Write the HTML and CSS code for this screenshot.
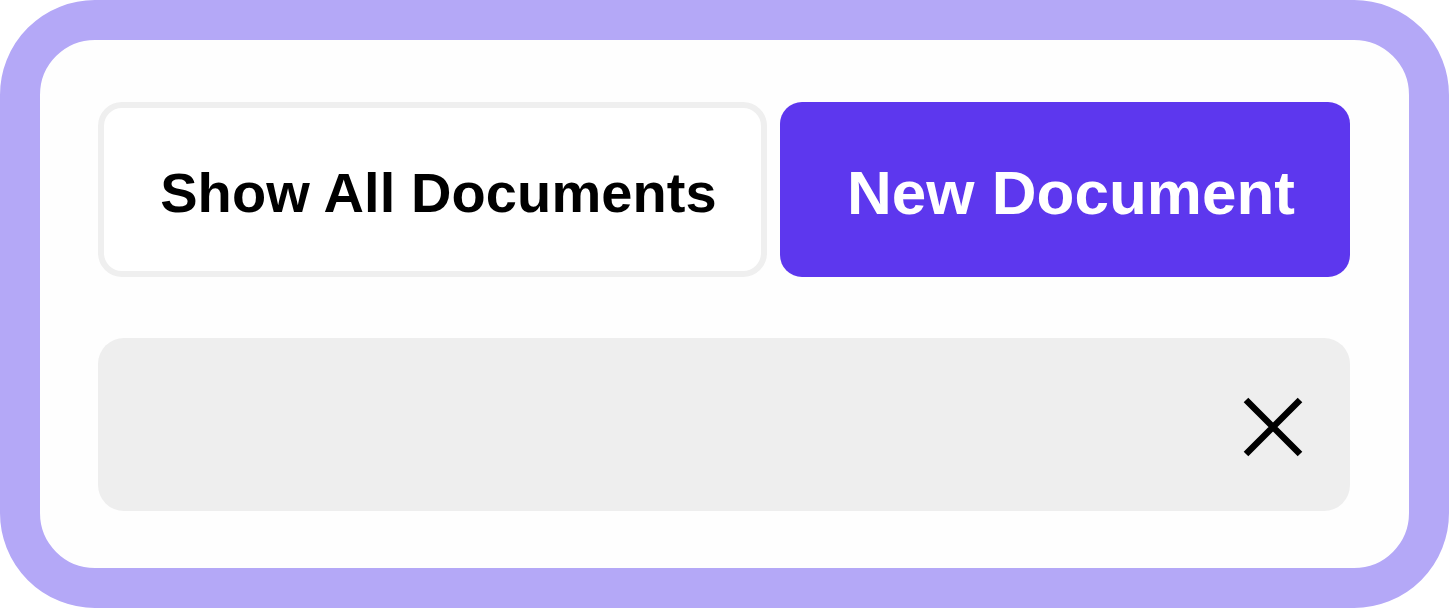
FILE: index.html
```html
<!DOCTYPE html>
<html lang="en">
<head>
    <meta charset="UTF-8">
    <meta name="viewport" content="width=device-width, initial-scale=1.0">
    <title>Documents</title>
    <link rel="stylesheet" href="styles.css">
</head>
<body>
    <div class="frame">
        <div class="actions">
            <button class="btn btn-secondary">Show All Documents</button>
            <button class="btn btn-primary">New Document</button>
        </div>

        <div class="bar">
            <button class="close" aria-label="Close">
                <svg width="60" height="60" viewBox="0 0 60 60">
                    <path d="M3 3 L57 57 M57 3 L3 57" stroke="#000000" stroke-width="6.5" fill="none"/>
                </svg>
            </button>
        </div>
    </div>
</body>
</html>
```

FILE: styles.css
```css
body {
    margin: 0;
    padding: 0;
    background-color: #ffffff;
    font-family: 'Liberation Sans', Arial, sans-serif;
}

.frame {
    box-sizing: border-box;
    width: 1449px;
    height: 608px;
    border: 40px solid #b4a8f7;
    border-radius: 95px;
    background-color: #fefefe;
    padding: 62px 59px 57px 58px;
}

.actions {
    display: flex;
    gap: 13px;
    height: 175px;
}

.btn {
    box-sizing: border-box;
    font-family: 'Liberation Sans', Arial, sans-serif;
    font-weight: bold;
    border: none;
    padding: 6px 0 0 12px;
    margin: 0;
    cursor: pointer;
}

.btn-secondary {
    width: 669px;
    background-color: #ffffff;
    border: 6px solid #efefef;
    border-radius: 24px;
    color: #000000;
    font-size: 56px;
    letter-spacing: 0.1px;
}

.btn-primary {
    flex: 1;
    background-color: #5d37ee;
    border-radius: 22px;
    color: #ffffff;
    font-size: 62px;
}

.bar {
    display: flex;
    justify-content: flex-end;
    align-items: center;
    margin-top: 61px;
    height: 173px;
    background-color: #eeeeee;
    border-radius: 26px;
    padding: 5px 47px 0 0;
    box-sizing: border-box;
}

.close {
    background: none;
    border: none;
    padding: 0;
    display: flex;
    cursor: pointer;
}
```
